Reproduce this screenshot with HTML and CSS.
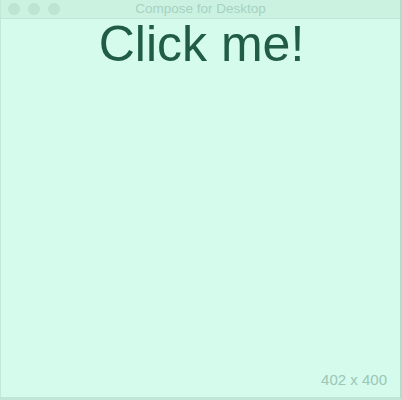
FILE: index.html
```html
<!DOCTYPE html>
<html>
<head>
<meta charset="utf-8">
<link rel="stylesheet" href="styles.css">
</head>
<body>
<div class="window">
  <div class="titlebar">
    <div class="lights">
      <span class="light"></span>
      <span class="light"></span>
      <span class="light"></span>
    </div>
    <div class="title">Compose for Desktop</div>
  </div>
  <div class="content">
    <div class="button-text">Click me!</div>
    <div class="spacer"></div>
    <div class="size">402 x 400</div>
  </div>
</div>
</body>
</html>
```
FILE: styles.css
```css
html, body {
  margin: 0;
  padding: 0;
  width: 402px;
  height: 400px;
  overflow: hidden;
  background: #d4fbec;
  font-family: "Liberation Sans", Arial, sans-serif;
}
.window {
  width: 402px;
  height: 400px;
  box-sizing: border-box;
  display: flex;
  flex-direction: column;
  border-left: 1px solid #c2e8d8;
  border-right: 2px solid #b4dccb;
  border-bottom: 3px solid #c0e6d6;
}
.titlebar {
  height: 18px;
  flex: none;
  position: relative;
  background: #cbf1e1;
  border-bottom: 1px solid #bfe6d6;
  display: flex;
  align-items: center;
  justify-content: center;
}
.lights {
  position: absolute;
  left: 7px;
  top: 3px;
  display: flex;
  gap: 8px;
}
.light {
  width: 12px;
  height: 12px;
  border-radius: 50%;
  background: #bde3d3;
}
.title {
  font-size: 13.5px;
  color: #a6d2c1;
  line-height: 18px;
}
.content {
  flex: 1;
  display: flex;
  flex-direction: column;
  align-items: center;
}
.button-text {
  font-size: 50px;
  line-height: 50px;
  color: #205c48;
  margin-left: 2px;
}
.spacer {
  flex: 1;
}
.size {
  align-self: flex-end;
  font-size: 15px;
  color: #9cc6b6;
  margin-right: 13px;
  margin-bottom: 9px;
}
```
